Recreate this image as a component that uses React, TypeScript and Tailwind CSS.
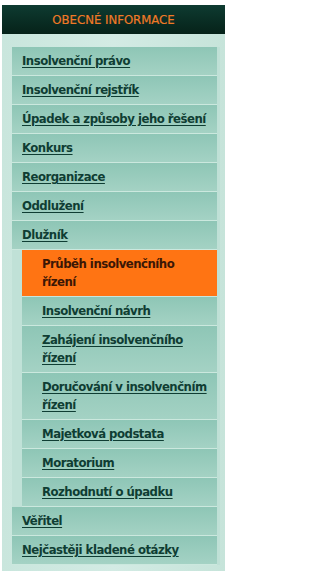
import React from "react";

type Item = { label: string; level: number; active?: boolean };

const items: Item[] = [
  { label: "Insolvenční právo", level: 0 },
  { label: "Insolvenční rejstřík", level: 0 },
  { label: "Úpadek a způsoby jeho řešení", level: 0 },
  { label: "Konkurs", level: 0 },
  { label: "Reorganizace", level: 0 },
  { label: "Oddlužení", level: 0 },
  { label: "Dlužník", level: 0 },
  { label: "Průběh insolvenčního řízení", level: 1, active: true },
  { label: "Insolvenční návrh", level: 1 },
  { label: "Zahájení insolvenčního řízení", level: 1 },
  { label: "Doručování v insolvenčním řízení", level: 1 },
  { label: "Majetková podstata", level: 1 },
  { label: "Moratorium", level: 1 },
  { label: "Rozhodnutí o úpadku", level: 1 },
  { label: "Věřitel", level: 0 },
  { label: "Nejčastěji kladené otázky", level: 0 },
];

export default function App() {
  return (
    <div
      className="w-[227px] h-[577px] bg-white pt-[5px] flex flex-col overflow-hidden"
      style={{ fontFamily: '"DejaVu Sans Condensed", "DejaVu Sans", sans-serif' }}
    >
      <div className="shrink-0 mx-[2px] h-[29px] bg-gradient-to-b from-[#0e3b31] to-[#062219] flex items-center justify-center">
        <span className="text-[13px] text-[#f07a26] pt-[1px] [-webkit-text-stroke:0.2px_#f07a26]">
          OBECNÉ INFORMACE
        </span>
      </div>
      <div className="mx-[2px] flex-1 bg-gradient-to-r from-[#c9e6dd] via-[#d3ebe4] to-[#c6e4da] pt-[13px] pl-[10px] pr-[5px] pb-[6px]">
        <ul className="flex flex-col border-r-[3px] border-[#bfe0d6]">
          {items.map((item) => (
            <li
              key={item.label}
              className={item.level === 1 ? "pl-[10px] bg-[#c0e1d7]" : ""}
            >
              {item.active ? (
                <div className="bg-[#ff7413] border-b border-[#c9e6dd] pl-[20px] pr-[8px] py-[5px] text-[13px] tracking-[-0.5px] leading-[18px] font-bold text-[#3b1705]">
                  {item.label}
                </div>
              ) : (
                <div
                  className={`bg-gradient-to-b from-[#8ec6b6] to-[#a4d2c4] border-b border-[#cbe8de] py-[5px] text-[13px] tracking-[-0.5px] leading-[18px] font-bold ${
                    item.level === 1 ? "pl-[20px] pr-[8px]" : "pl-[10px] pr-[2px]"
                  }`}
                >
                  <a href="#" className="text-[#0f3d33] underline underline-offset-[2px]">
                    {item.label}
                  </a>
                </div>
              )}
            </li>
          ))}
        </ul>
      </div>
      <div className="shrink-0 h-[6px] bg-white" />
      <div className="shrink-0 h-[4px] bg-[#0a2e24]" />
    </div>
  );
}
